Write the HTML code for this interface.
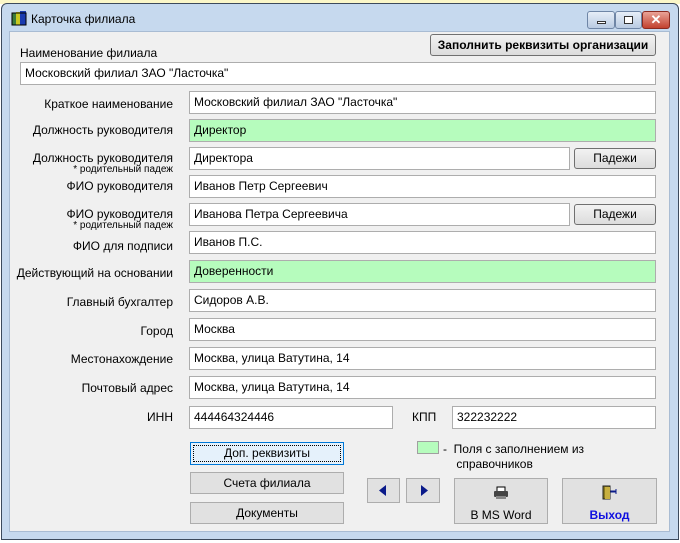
<!DOCTYPE html>
<html><head><meta charset="utf-8"><style>
*{box-sizing:border-box;margin:0;padding:0}
body{width:680px;height:543px;background:#fff;font-family:"Liberation Sans",Arial,sans-serif;font-size:12px;color:#000;position:relative;overflow:hidden}
.top{position:absolute;left:0;top:0;width:680px;height:4px;background:#fbf7c8}
.win{position:absolute;left:1px;top:3px;width:678px;height:537px;background:#c6d9ee;border:1px solid #3c4a5c;border-radius:6px 6px 0 0}
.content{position:absolute;left:9px;top:31px;width:661px;height:501px;background:#f0f0f0;border:1px solid #a9bcd3}
.t{position:absolute;white-space:nowrap}
.f{position:absolute;background:#fff;border:1px solid #adadad;padding:0 4px;line-height:21px;height:23px;white-space:nowrap}
.g{background:#b6fcbd}
.l{position:absolute;right:507px;text-align:right;white-space:nowrap}
.b{position:absolute;background:#e1e1e1;border:1px solid #adadad;text-align:center;white-space:nowrap}
</style></head><body>
<div class="top"></div>
<div class="win"></div>
<div class="t" style="left:11px;top:10px;width:16px;height:16px">
<svg width="17" height="16"><rect x="1" y="3" width="4" height="12" fill="#3a7a3a"/><rect x="5" y="2" width="4" height="13" fill="#c8c820"/><rect x="9" y="1" width="6" height="14" fill="#1a3bb0"/><rect x="1" y="3" width="14" height="12" fill="none" stroke="#000" stroke-width="1"/></svg></div>
<div class="t" style="left:31px;top:12px;font-size:12px">Карточка филиала</div>
<div class="t" style="left:587px;top:11px;width:28px;height:18px;border:1px solid #6f86a6;border-radius:3px;background:linear-gradient(#e6eef8,#b9cbe2)"><div style="position:absolute;left:9px;top:9px;width:9px;height:3px;border:1px solid #333;background:#fff"></div></div>
<div class="t" style="left:615px;top:11px;width:27px;height:18px;border:1px solid #6f86a6;border-radius:3px;background:linear-gradient(#e6eef8,#b9cbe2)"><div style="position:absolute;left:8px;top:4px;width:9px;height:8px;border:1px solid #333;background:#fff"></div></div>
<div class="t" style="left:642px;top:11px;width:28px;height:18px;border:1px solid #8a2a20;border-radius:3px;background:linear-gradient(#e9a397,#c2412e);color:#fff;font-weight:bold;text-align:center;line-height:16px;font-size:13px">✕</div>
<div class="content"></div>

<div class="b" style="left:430px;top:34px;width:226px;height:22px;line-height:20px;font-weight:bold;border-radius:3px;background:linear-gradient(#f2f2f2,#dcdcdc);border-color:#707070">Заполнить реквизиты организации</div>
<div class="t" style="left:20px;top:46px">Наименование филиала</div>
<div class="f" style="left:20px;top:62px;width:636px">Московский филиал ЗАО "Ласточка"</div>

<div class="l" style="top:97px">Краткое наименование</div>
<div class="f" style="left:189px;top:91px;width:467px">Московский филиал ЗАО "Ласточка"</div>
<div class="l" style="top:123px">Должность руководителя</div>
<div class="f g" style="left:189px;top:119px;width:467px">Директор</div>
<div class="l" style="top:151px">Должность руководителя</div>
<div class="l" style="top:164px;font-size:10px">* родительный падеж</div>
<div class="f" style="left:189px;top:147px;width:381px">Директора</div>
<div class="b" style="left:574px;top:148px;width:82px;height:21px;line-height:19px;border-radius:3px;background:linear-gradient(#f2f2f2,#dcdcdc);border-color:#707070">Падежи</div>
<div class="l" style="top:179px">ФИО руководителя</div>
<div class="f" style="left:189px;top:175px;width:467px">Иванов Петр Сергеевич</div>
<div class="l" style="top:207px">ФИО руководителя</div>
<div class="l" style="top:220px;font-size:10px">* родительный падеж</div>
<div class="f" style="left:189px;top:203px;width:381px">Иванова Петра Сергеевича</div>
<div class="b" style="left:574px;top:204px;width:82px;height:21px;line-height:19px;border-radius:3px;background:linear-gradient(#f2f2f2,#dcdcdc);border-color:#707070">Падежи</div>
<div class="l" style="top:239px">ФИО для подписи</div>
<div class="f" style="left:189px;top:231px;width:467px">Иванов П.С.</div>
<div class="l" style="top:266px">Действующий на основании</div>
<div class="f g" style="left:189px;top:260px;width:467px">Доверенности</div>
<div class="l" style="top:295px">Главный бухгалтер</div>
<div class="f" style="left:189px;top:289px;width:467px">Сидоров А.В.</div>
<div class="l" style="top:324px">Город</div>
<div class="f" style="left:189px;top:318px;width:467px">Москва</div>
<div class="l" style="top:352px">Местонахождение</div>
<div class="f" style="left:189px;top:347px;width:467px">Москва, улица Ватутина, 14</div>
<div class="l" style="top:381px">Почтовый адрес</div>
<div class="f" style="left:189px;top:376px;width:467px">Москва, улица Ватутина, 14</div>
<div class="l" style="top:410px">ИНН</div>
<div class="f" style="left:189px;top:406px;width:204px">444464324446</div>
<div class="t" style="left:412px;top:410px">КПП</div>
<div class="f" style="left:452px;top:406px;width:204px">322232222</div>

<div class="b" style="left:190px;top:442px;width:154px;height:23px;line-height:21px;background:#e5f1fb;border-color:#0078d7"><div style="position:absolute;left:2px;top:2px;right:2px;bottom:2px;border:1px dotted #000"></div>Доп. реквизиты</div>
<div class="b" style="left:190px;top:472px;width:154px;height:22px;line-height:20px">Счета филиала</div>
<div class="b" style="left:190px;top:502px;width:154px;height:22px;line-height:20px">Документы</div>
<div class="t" style="left:417px;top:441px;width:22px;height:13px;background:#b6fcbd;border:1px solid #a0a0a0"></div>
<div class="t" style="left:443px;top:442px;line-height:15px">-&nbsp; Поля с заполнением из<br>&nbsp;&nbsp;&nbsp;&nbsp;справочников</div>
<div class="b" style="left:367px;top:478px;width:33px;height:25px"><svg width="31" height="23"><polygon points="11,11.5 18,6 18,17" fill="#0a1a8a"/></svg></div>
<div class="b" style="left:406px;top:478px;width:34px;height:25px"><svg width="32" height="23"><polygon points="21,11.5 14,6 14,17" fill="#0a1a8a"/></svg></div>
<div class="b" style="left:454px;top:478px;width:94px;height:46px"><svg width="16" height="14" style="position:absolute;left:38px;top:7px"><rect x="4" y="1" width="8" height="5" fill="#fff" stroke="#000"/><rect x="1" y="5" width="14" height="6" rx="1" fill="#444"/><rect x="3" y="10" width="10" height="3" fill="#888"/></svg><div style="position:absolute;left:0;right:0;top:29px">B MS Word</div></div>
<div class="b" style="left:562px;top:478px;width:95px;height:46px"><svg width="16" height="16" style="position:absolute;left:38px;top:6px"><rect x="2" y="1" width="7" height="13" fill="#8a7a20" stroke="#222"/><rect x="4" y="2" width="5" height="12" fill="#c8b040"/><polygon points="10,6 15,6 15,4 15,9 15,7 10,7" fill="#0a1a8a" stroke="#0a1a8a"/></svg><div style="position:absolute;left:0;right:0;top:29px;color:#1010e0;font-weight:bold">Выход</div></div>
</body></html>
